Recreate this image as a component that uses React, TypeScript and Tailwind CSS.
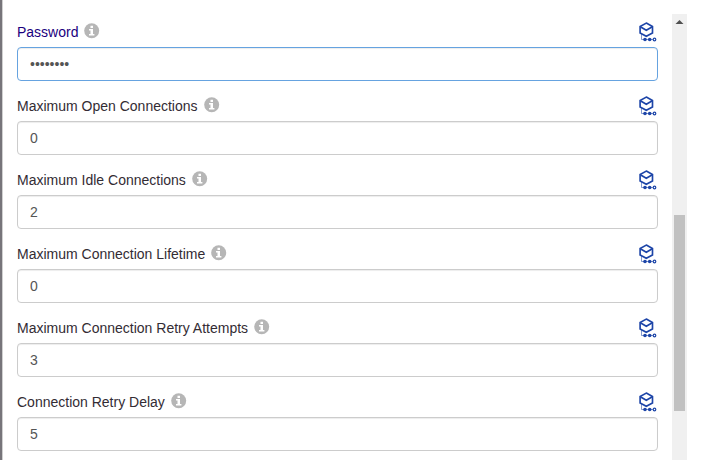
type Field = { label: string; value: string; type?: string; active?: boolean };

const fields: Field[] = [
  { label: "Password", value: "password", type: "password", active: true },
  { label: "Maximum Open Connections", value: "0" },
  { label: "Maximum Idle Connections", value: "2" },
  { label: "Maximum Connection Lifetime", value: "0" },
  { label: "Maximum Connection Retry Attempts", value: "3" },
  { label: "Connection Retry Delay", value: "5" },
];

function InfoIcon() {
  return (
    <svg width="16" height="16" viewBox="0 0 16 16" className="mb-[2px] ml-[6px] shrink-0">
      <circle cx="7.7" cy="7.8" r="7.5" fill="#b6b6b6" />
      <path d="M6.5 2.8h2.5v2.1H6.5zM5 6h4v5h1.4v1.5H5V11h1.5V7.5H5z" fill="#fff" />
    </svg>
  );
}

function PropertyIcon() {
  return (
    <svg width="20" height="21" viewBox="0 0 20 21" fill="none" stroke="#1d45a8" className="shrink-0">
      <path d="M8.3 2.1 14.5 5.4V11.9L8.3 15.2 2.1 11.9V5.4Z" strokeWidth="1.65" />
      <path d="M2.3 5.8 8.3 9.2 14.3 5.8" strokeWidth="1.65" />
      <path d="M3.5 12.5V18.5H15" strokeWidth="1" strokeOpacity="0.55" />
      <circle cx="7" cy="18.5" r="1.8" fill="#1d45a8" stroke="none" />
      <circle cx="11.7" cy="18.5" r="1.8" fill="#1d45a8" stroke="none" />
      <circle cx="16.5" cy="18.5" r="1.3" fill="#fff" strokeWidth="1.2" />
    </svg>
  );
}

function FieldRow({ label, value, type = "text", active = false }: Field) {
  return (
    <div className="h-[74px]">
      <div className="flex h-[26px] items-start justify-between">
        <label className={`flex items-center pt-px text-[14px] leading-5 ${active ? "text-[#1a007e]" : "text-[#332c34]"}`}>
          {label}
          <InfoIcon />
        </label>
        <PropertyIcon />
      </div>
      <input
        type={type}
        defaultValue={value}
        className={`block h-[34px] w-full rounded border bg-white px-3 text-[14px] text-[#555] shadow-[inset_0_1px_1px_rgba(0,0,0,0.075)] outline-none ${active ? "border-[#66a3e0]" : "border-[#ccc]"}`}
      />
    </div>
  );
}

export default function App() {
  return (
    <div className="flex h-[460px] w-[701px] overflow-hidden bg-white font-['Liberation_Sans',Arial,sans-serif]">
      <div className="w-[3px] shrink-0 border-r border-[#d0d0d0] bg-[#77757a]" />
      <main className="ml-[14px] w-[641px] shrink-0 pt-[21px]">
        {fields.map((field) => (
          <FieldRow key={field.label} {...field} />
        ))}
      </main>
      <div className="mt-[14px] ml-[14px] flex w-[15px] shrink-0 flex-col items-center bg-[#f0f0f0]">
        <svg width="15" height="15" viewBox="0 0 15 15" className="shrink-0">
          <path d="M7.5 6 11.5 10H3.5Z" fill="#505050" />
        </svg>
        <div className="mt-[186px] h-[196px] w-[11px] shrink-0 bg-[#c1c1c1]" />
      </div>
    </div>
  );
}
